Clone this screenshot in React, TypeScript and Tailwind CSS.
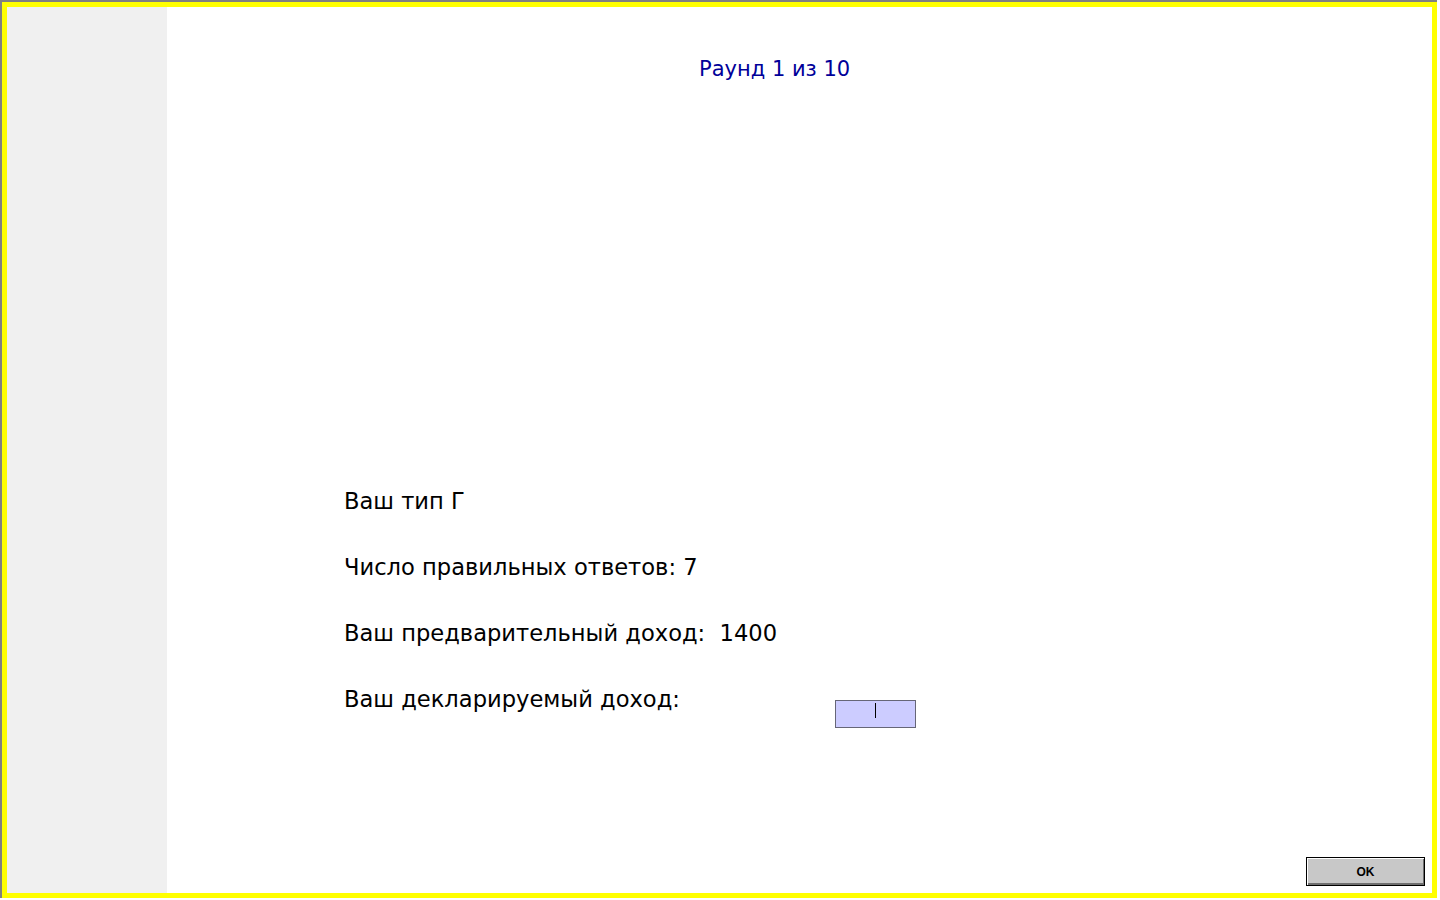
import { useState } from "react";

const font = { fontFamily: '"DejaVu Sans", Verdana, sans-serif' };

export default function App() {
  const [declared, setDeclared] = useState("");

  return (
    <div className="w-[1440px] h-[900px] bg-white pr-[3px] pb-[2px] overflow-hidden">
      <div className="w-full h-full border-l-2 border-t-2 border-[#808080]">
        <div className="flex w-full h-full border-[5px] border-[#ffff00]" style={font}>
          {/* left strip */}
          <aside className="w-[160px] bg-[#f0f0f0]" />

          <main className="flex-1 flex flex-col bg-white">
            <div className="pt-[52px] pl-[532px] text-[21px] leading-none text-[#000099]">
              Раунд 1 из 10
            </div>

            <div className="mt-[410px] pl-[177px] text-[22.6px] leading-[22px] text-black flex flex-col gap-[44px]">
              <div className="h-[22px]">Ваш тип Г</div>
              <div className="h-[22px]">Число правильных ответов: 7</div>
              <div className="h-[22px] whitespace-pre">Ваш предварительный доход:  1400</div>
              <div className="h-[22px] flex items-start">
                <span className="w-[491px] shrink-0">Ваш декларируемый доход:</span>
                <div className="relative mt-[12px]">
                  <input
                    type="text"
                    value={declared}
                    onChange={(e) => setDeclared(e.target.value)}
                    className="w-[81px] h-[28px] bg-[#ccccff] border border-[#666677] outline-none px-1 text-sm"
                  />
                  <span className="absolute left-[40px] top-[3px] w-px h-[15px] bg-black" />
                </div>
              </div>
            </div>

            <div className="mt-auto flex justify-end pr-[7px] pb-[7px]">
              <button
                type="button"
                className="w-[119px] h-[29px] bg-[#c8c8c8] border border-black shadow-[inset_1px_1px_0_#ffffff,inset_-1px_-2px_0_#6e6e6e] text-[12px] font-bold text-black"
                style={{ fontFamily: '"Liberation Sans", Arial, sans-serif' }}
              >
                OK
              </button>
            </div>
          </main>
        </div>
      </div>
    </div>
  );
}
